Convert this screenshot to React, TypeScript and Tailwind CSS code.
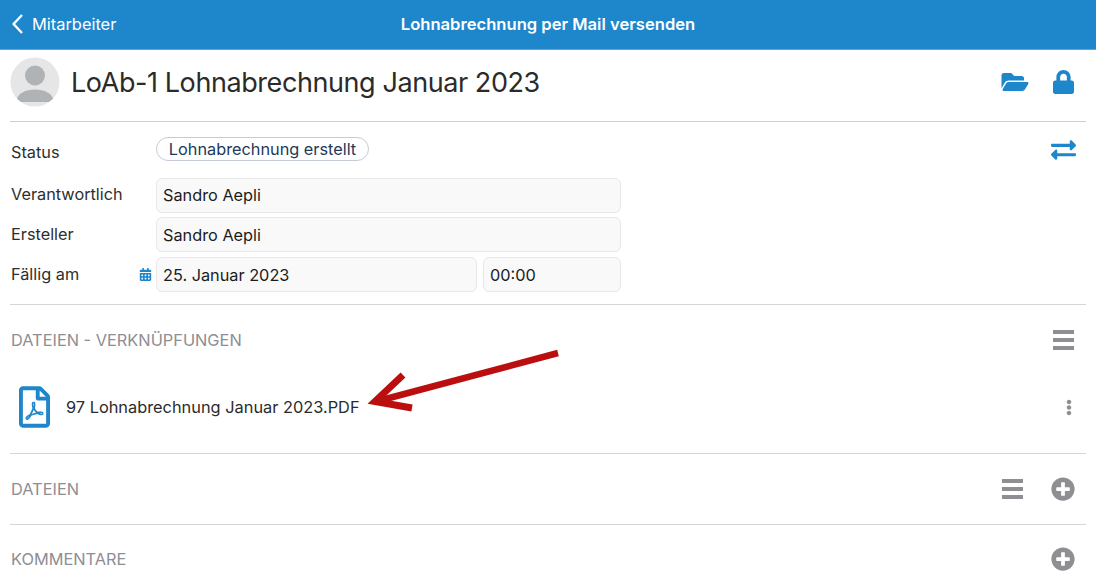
import React from "react";
import {
  FaCalendarAlt,
  FaEllipsisV,
  FaExchangeAlt,
  FaFolderOpen,
  FaLock,
  FaPlusCircle,
  FaRegFilePdf,
} from "react-icons/fa";

function Field({ children, className }: { children: React.ReactNode; className: string }) {
  return (
    <div
      className={`flex h-[35px] items-center rounded-[6px] border border-[#e8e8e8] bg-[#f9f9f9] pl-[6px] text-[16.3px] text-[#1c1c1c] ${className}`}
    >
      {children}
    </div>
  );
}

function Avatar() {
  return (
    <svg width="50" height="50" viewBox="0 0 50 50" className="shrink-0">
      <defs>
        <clipPath id="avatar-clip">
          <circle cx="25" cy="25" r="24.5" />
        </clipPath>
      </defs>
      <circle cx="25" cy="25" r="24.5" fill="#e6e6e6" />
      <g clipPath="url(#avatar-clip)">
        <circle cx="25" cy="18.5" r="10" fill="#afb3b6" />
        <path d="M6 45 C7 36 16 32.5 25 32.5 C34 32.5 43 36 44 45 Z" fill="#afb3b6" />
      </g>
    </svg>
  );
}

function Bars() {
  return (
    <svg width="21" height="20" viewBox="0 0 21 20" fill="#8e8e93" className="shrink-0">
      <rect y="0" width="21" height="4" />
      <rect y="8" width="21" height="4" />
      <rect y="16" width="21" height="4" />
    </svg>
  );
}

export default function App() {
  return (
    <div
      className="relative h-[580px] w-[1096px] overflow-hidden bg-white"
      style={{ fontFamily: "Inter, 'Liberation Sans', sans-serif" }}
    >
      <header className="relative flex h-[50px] items-center justify-center border-b border-[#5fa5d6] bg-[#1e86cb] text-white">
        <div className="absolute left-[12px] top-0 flex h-[48px] items-center gap-[9px]">
          <svg width="11" height="20" viewBox="0 0 11 20" fill="none">
            <path d="M10 1 L1.6 10 L10 19" stroke="currentColor" strokeWidth="2.3" />
          </svg>
          <span className="text-[16.4px]">Mitarbeiter</span>
        </div>
        <span className="mb-[1px] text-[16.6px] font-semibold">Lohnabrechnung per Mail versenden</span>
      </header>

      <div className="px-[10px]">
        <div className="flex h-[72px] items-center border-b border-[#cfcfcf] pb-[7px]">
          <Avatar />
          <h1 className="ml-[11px] text-[27px] leading-none tracking-[-0.42px] text-[#2b2b2b]">
            LoAb-1 Lohnabrechnung Januar 2023
          </h1>
          <div className="ml-auto flex items-center gap-[23px] pr-[11px] text-[#1e86cb]">
            <FaFolderOpen className="h-[24px] w-[28px]" />
            <FaLock className="h-[24px] w-[23px]" />
          </div>
        </div>

        <div className="flex h-[183px] border-b border-[#d4d4d4]">
          <div className="flex-1">
            <div className="flex h-[56px] items-start pt-[15px]">
              <span className="ml-[1px] mt-[3px] w-[145px] text-[16.3px] text-[#2e2e2e]">Status</span>
              <span className="flex h-[24px] w-[213px] items-center justify-center rounded-full border border-[#c4cbd6] text-[16.3px] text-[#20395c]">
                Lohnabrechnung erstellt
              </span>
            </div>
            <div className="flex flex-col gap-[4px]">
              <div className="flex items-center">
                <span className="mb-[2px] ml-[1px] w-[145px] text-[16.3px] text-[#2e2e2e]">Verantwortlich</span>
                <Field className="w-[465px]">Sandro Aepli</Field>
              </div>
              <div className="flex items-center">
                <span className="ml-[1px] w-[145px] text-[16.3px] text-[#2e2e2e]">Ersteller</span>
                <Field className="w-[465px] pt-[2px]">Sandro Aepli</Field>
              </div>
              <div className="mt-[1px] flex items-center">
                <span className="ml-[1px] w-[128px] text-[16.3px] text-[#2e2e2e]">Fällig am</span>
                <FaCalendarAlt className="mr-[4px] h-[13px] w-[13px] text-[#1e86cb]" />
                <Field className="w-[321px] pt-[2px]">25. Januar 2023</Field>
                <Field className="ml-[6px] w-[138px] pt-[2px]">00:00</Field>
              </div>
            </div>
          </div>
          <FaExchangeAlt className="mr-[10px] mt-[15px] h-[26px] w-[25px] text-[#1e86cb]" />
        </div>

        <section className="h-[149px] border-b border-[#d4d4d4]">
          <div className="flex h-[70px] items-center justify-between pl-[1px] pr-[12px]">
            <span className="text-[16.35px] text-[#8e8e93]">DATEIEN - VERKNÜPFUNGEN</span>
            <Bars />
          </div>
          <div className="flex h-[64px] items-center">
            <FaRegFilePdf className="ml-[9px] h-[42px] w-[31px] text-[#1e86cb]" />
            <span className="ml-[16px] text-[16.35px] text-[#2b2b2b]">97 Lohnabrechnung Januar 2023.PDF</span>
            <FaEllipsisV className="ml-auto mr-[14px] h-[17px] w-[6px] text-[#8e8e93]" />
          </div>
        </section>

        <section className="flex h-[71px] items-center justify-between border-b border-[#d4d4d4] pl-[1px] pr-[11px]">
          <span className="text-[16.35px] text-[#8e8e93]">DATEIEN</span>
          <div className="flex items-center gap-[28px] text-[#8e8e93]">
            <Bars />
            <FaPlusCircle className="h-[24px] w-[24px]" />
          </div>
        </section>

        <section className="flex h-[68px] items-center justify-between pl-[1px] pr-[11px]">
          <span className="text-[16.35px] text-[#8e8e93]">KOMMENTARE</span>
          <FaPlusCircle className="h-[24px] w-[24px] text-[#8e8e93]" />
        </section>
      </div>

      {/* annotation arrow on top of the screenshot */}
      <svg className="absolute left-0 top-0" width="1096" height="580" fill="none">
        <path d="M558 353 L378 401" stroke="#bb0f0f" strokeWidth="6.5" />
        <path d="M403 375 L375 401.5 L412 408" stroke="#bb0f0f" strokeWidth="7" />
      </svg>
    </div>
  );
}
